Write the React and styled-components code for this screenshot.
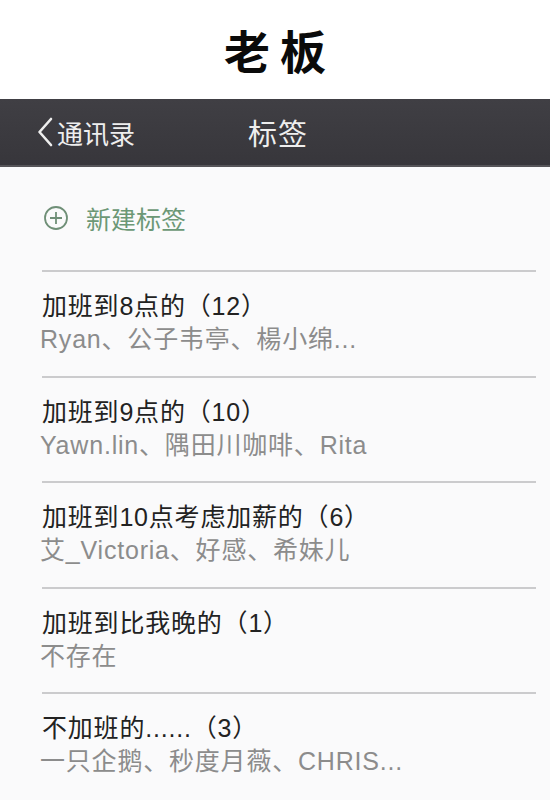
import React from 'react';
import styled, { createGlobalStyle } from 'styled-components';

const tags = [
  { name: '加班到8点的（12）', members: 'Ryan、公子韦亭、楊小绵...' },
  { name: '加班到9点的（10）', members: 'Yawn.lin、隅田川咖啡、Rita' },
  { name: '加班到10点考虑加薪的（6）', members: '艾_Victoria、好感、希妹儿' },
  { name: '加班到比我晚的（1）', members: '不存在' },
  { name: '不加班的......（3）', members: '一只企鹅、秒度月薇、CHRIS...' },
];

const App = () => {
  return (
    <>
      <GlobalStyle />
      <Page>
        <Caption>老板</Caption>
        <NavBar>
          <BackLink>
            <svg width="18" height="30" viewBox="0 0 18 30">
              <path
                d="M15 2 L3.5 15 L15 28"
                fill="none"
                stroke="#eeeeee"
                strokeWidth="2.6"
                strokeLinecap="round"
                strokeLinejoin="round"
              />
            </svg>
            通讯录
          </BackLink>
          <NavTitle>标签</NavTitle>
        </NavBar>
        <Content>
          <NewTag>
            <svg width="26" height="26" viewBox="0 0 26 26">
              <circle cx="13" cy="13" r="11" fill="none" stroke="#6f8f77" strokeWidth="1.8" />
              <path d="M13 7 V19 M7 13 H19" stroke="#6f8f77" strokeWidth="1.8" />
            </svg>
            <span>新建标签</span>
          </NewTag>
          <List>
            {tags.map((t) => (
              <Row key={t.name}>
                <TagName>{t.name}</TagName>
                <Members>{t.members}</Members>
              </Row>
            ))}
          </List>
        </Content>
      </Page>
    </>
  );
};

export default App;

const GlobalStyle = createGlobalStyle`
  html, body {
    margin: 0;
    padding: 0;
    background: #fafafb;
  }
  body {
    font-family: "Liberation Sans", "Noto Sans CJK SC", sans-serif;
  }
`;

const Page = styled.div`
  width: 550px;
  height: 800px;
  overflow: hidden;
  display: flex;
  flex-direction: column;
  background: #fafafb;
`;

const Caption = styled.div`
  height: 99px;
  background: #fff;
  display: flex;
  align-items: center;
  justify-content: center;
  font-family: "Noto Sans CJK SC", sans-serif;
  font-size: 46px;
  font-weight: 700;
  letter-spacing: 10px;
  color: #0a0a0a;
  padding: 0 0 2px 10px;
  box-sizing: border-box;
`;

const NavBar = styled.div`
  height: 68px;
  background: linear-gradient(#403f44, #37363b);
  border-bottom: 2px solid #555458;
  box-sizing: border-box;
  display: flex;
  align-items: center;
  padding-left: 36px;
  color: #eeeeee;
  font-family: "Noto Sans CJK SC", sans-serif;
`;

const BackLink = styled.div`
  display: flex;
  align-items: center;
  gap: 3px;
  font-size: 26px;
  width: 212px;
`;

const NavTitle = styled.div`
  font-size: 29px;
  letter-spacing: 1px;
`;

const Content = styled.div`
  padding: 0 14px 0 42px;
`;

const NewTag = styled.div`
  height: 103px;
  display: flex;
  align-items: center;
  gap: 17px;
  color: #6c9876;
  font-size: 25px;
  padding-left: 1px;
  padding-bottom: 2px;
  box-sizing: border-box;
`;

const List = styled.div`
  display: flex;
  flex-direction: column;
`;

const Row = styled.div`
  border-top: 2px solid #cbcbcd;
  height: 105.5px;
  box-sizing: border-box;
  padding-top: 19px;
  display: flex;
  flex-direction: column;
  gap: 3px;
`;

const TagName = styled.div`
  font-size: 25px;
  letter-spacing: 0.8px;
  color: #222;
  line-height: 30px;
`;

const Members = styled.div`
  font-size: 25px;
  letter-spacing: 0.8px;
  color: #8c8c8c;
  line-height: 30px;
  margin-left: -2px;
`;
